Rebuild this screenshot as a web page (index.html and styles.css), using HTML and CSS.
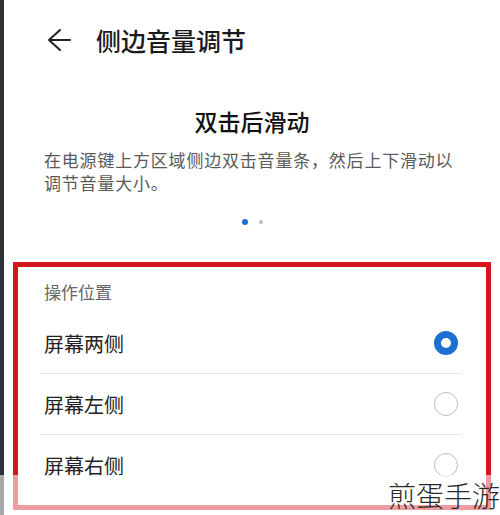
FILE: index.html
```html
<!DOCTYPE html>
<html lang="zh-CN">
<head>
    <meta charset="UTF-8">
    <meta name="viewport" content="width=device-width, initial-scale=1.0">
    <title>侧边音量调节</title>
    <link rel="stylesheet" href="styles.css">
</head>
<body>

<div class="screen">
    <header class="topbar">
        <svg class="back-icon" width="24" height="24" viewBox="0 0 24 24">
            <path d="M23 12H2M13 2L2 12l11 10" fill="none" stroke="#222" stroke-width="2" stroke-linecap="round" stroke-linejoin="round"/>
        </svg>
        <h1>侧边音量调节</h1>
    </header>

    <section class="intro">
        <h2>双击后滑动</h2>
        <p>在电源键上方区域侧边双击音量条，然后上下滑动以调节音量大小。</p>
        <div class="dots">
            <span class="dot active"></span>
            <span class="dot"></span>
        </div>
    </section>

    <section class="options">
        <div class="options-title">操作位置</div>
        <ul class="option-list">
            <li class="option"><span>屏幕两侧</span><span class="radio checked"></span></li>
            <li class="option"><span>屏幕左侧</span><span class="radio"></span></li>
            <li class="option"><span>屏幕右侧</span><span class="radio"></span></li>
        </ul>
    </section>
</div>

<div class="watermark">
    <span class="watermark-text">煎蛋手游</span>
</div>

</body>
</html>
```

FILE: styles.css
```css
body {
    margin: 0;
    background-color: #fff;
    font-family: "Noto Sans CJK SC", "Noto Sans", sans-serif;
    overflow: hidden;
}

.screen {
    border-left: 4px solid #2e3236;
    height: 515px;
    box-sizing: border-box;
}

.topbar {
    display: flex;
    align-items: center;
    height: 80px;
    padding-left: 43px;
}

.back-icon {
    display: block;
    margin-right: 25px;
}

.topbar h1 {
    margin: 0;
    font-size: 25px;
    font-weight: 500;
    color: #1a1a1a;
    line-height: 30px;
}

.intro {
    padding: 0 40px;
}

.intro h2 {
    margin: 26px 0 0;
    text-align: center;
    font-size: 23px;
    font-weight: 500;
    line-height: 30px;
    color: #111;
}

.intro p {
    margin: 12px 0 0;
    font-size: 17px;
    letter-spacing: 0.8px;
    line-height: 23px;
    color: #5a5a5a;
}

.dots {
    display: flex;
    justify-content: center;
    align-items: center;
    gap: 11px;
    margin-top: 25px;
    height: 6px;
}

.dot {
    width: 4px;
    height: 4px;
    border-radius: 50%;
    background-color: #bbb;
}

.dot.active {
    width: 6px;
    height: 6px;
    background-color: #1f6fd1;
}

.options {
    margin: 37px 0 0 9px;
    width: 478px;
    height: 248px;
    box-sizing: border-box;
    border: 5px solid #d5141b;
    padding-top: 14px;
}

.options-title {
    padding-left: 26px;
    font-size: 17px;
    line-height: 22px;
    color: #666;
}

.option-list {
    list-style: none;
    margin: 10px 24px 0 22px;
    padding: 0;
}

.option {
    display: flex;
    justify-content: space-between;
    align-items: center;
    height: 60px;
    padding: 0 4px;
    border-bottom: 1px solid #e6e6e6;
    font-size: 20px;
    color: #222;
}

.option:last-child {
    border-bottom: none;
}

.radio {
    width: 24px;
    height: 24px;
    box-sizing: border-box;
    border-radius: 50%;
    border: 1.5px solid #bdbdbd;
}

.radio.checked {
    border: 7px solid #1f6fd1;
}

.watermark {
    position: absolute;
    left: 0;
    top: 475px;
    width: 500px;
    height: 40px;
    background-color: rgba(255, 255, 255, 0.58);
    overflow: hidden;
}

.watermark-text {
    position: absolute;
    left: 388px;
    top: 3px;
    font-size: 28px;
    font-weight: 300;
    line-height: 34px;
    color: #2a2a2a;
    white-space: nowrap;
}
```
